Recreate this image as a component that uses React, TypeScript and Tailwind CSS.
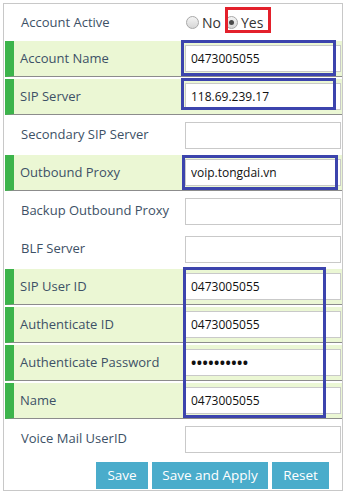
import React from "react";

type Field = {
  label: string;
  value?: string;
  green?: boolean;
  password?: boolean;
};

const fields: Field[] = [
  { label: "Account Name", value: "0473005055", green: true },
  { label: "SIP Server", value: "118.69.239.17", green: true },
  { label: "Secondary SIP Server" },
  { label: "Outbound Proxy", value: "voip.tongdai.vn", green: true },
  { label: "Backup Outbound Proxy" },
  { label: "BLF Server" },
  { label: "SIP User ID", value: "0473005055", green: true },
  { label: "Authenticate ID", value: "0473005055", green: true },
  { label: "Authenticate Password", value: "••••••••••", green: true, password: true },
  { label: "Name", value: "0473005055", green: true },
  { label: "Voice Mail UserID" },
];

function Radio({ checked, label }: { checked?: boolean; label: string }) {
  return (
    <label className="flex items-center gap-[3px]">
      <span className="w-[13px] h-[13px] rounded-full border border-[#a8a8a8] bg-gradient-to-b from-[#f4f4f4] to-[#d6d6d6] flex items-center justify-center">
        {checked && <span className="w-[5px] h-[5px] rounded-full bg-[#4a4a4a]" />}
      </span>
      <span>{label}</span>
    </label>
  );
}

function Row({ field }: { field: Field }) {
  const rowClass = field.green
    ? "ml-[1px] border-l-[9px] border-l-[#3cb44b] border-b border-b-[#8c8c8c] bg-[#ebf7d4] pl-[6px]"
    : "pl-[17px]";
  return (
    <div className={`flex items-center h-[36px] mb-[2px] ${rowClass}`}>
      <div className={field.green ? "w-[165px]" : "w-[164px]"}>{field.label}</div>
      <input
        readOnly
        value={field.value ?? ""}
        className={`w-[156px] h-[27px] border border-[#c9c9c9] bg-white pl-[5px] text-[#111] outline-none ${
          field.password ? "text-[14px] font-bold tracking-[0.5px]" : "text-[12px]"
        }`}
      />
    </div>
  );
}

export default function App() {
  return (
    <div className="relative w-[343px] h-[494px] bg-white overflow-hidden font-['Open_Sans',sans-serif] text-[13px] text-[#3d5166]">
      <div className="ml-[3px] mt-[3px] w-[340px] h-[488px] border border-[#c8c8c8] overflow-hidden">
        {/* Account Active */}
        <div className="flex items-center h-[37px] pl-[17px]">
          <div className="w-[165px]">Account Active</div>
          <div className="flex items-center gap-[4px] text-[#333] text-[14px]">
            <Radio label="No" />
            <Radio label="Yes" checked />
          </div>
        </div>

        {fields.map((f) => (
          <Row key={f.label} field={f} />
        ))}

        <div className="flex justify-end gap-[4px] pr-[13px] mt-[5px]">
          <button className="w-[52px] h-[27px] bg-[#4aaccb] text-white text-[13.5px]">Save</button>
          <button className="w-[116px] h-[27px] bg-[#4aaccb] text-white text-[13.5px]">Save and Apply</button>
          <button className="w-[57px] h-[27px] bg-[#4aaccb] text-white text-[13.5px]">Reset</button>
        </div>
      </div>

      {/* annotation boxes */}
      <div className="absolute left-[225px] top-[7px] w-[46px] h-[26px] border-[3px] border-[#e3202b]" />
      <div className="absolute left-[181px] top-[40px] w-[155px] h-[36px] border-[3px] border-[#3c44ad]" />
      <div className="absolute left-[181px] top-[78px] w-[155px] h-[32px] border-[3px] border-[#3c44ad]" />
      <div className="absolute left-[182px] top-[155px] w-[156px] h-[35px] border-[3px] border-[#3c44ad]" />
      <div className="absolute left-[183px] top-[267px] w-[143px] h-[151px] border-[3px] border-[#3c44ad]" />
    </div>
  );
}
